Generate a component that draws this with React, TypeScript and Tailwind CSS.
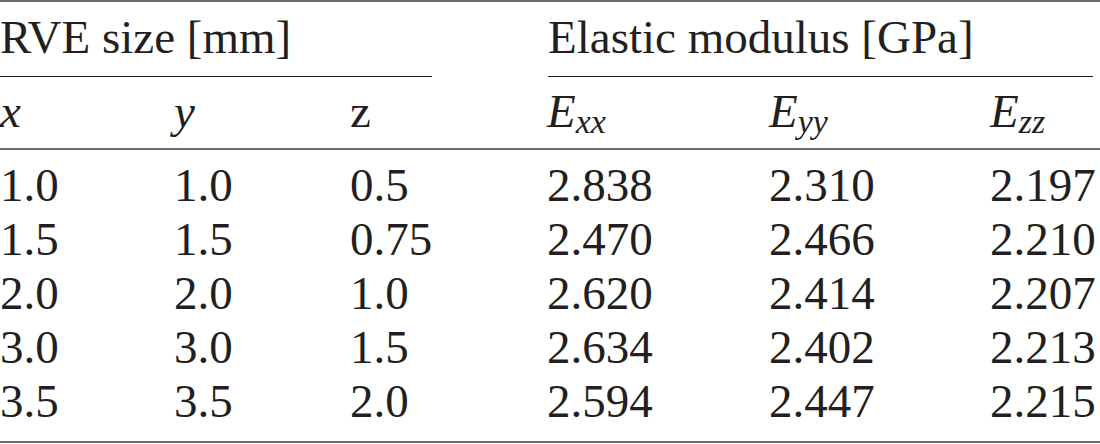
import React from "react";

const rows: [string, string, string, string, string, string][] = [
  ["1.0", "1.0", "0.5", "2.838", "2.310", "2.197"],
  ["1.5", "1.5", "0.75", "2.470", "2.466", "2.210"],
  ["2.0", "2.0", "1.0", "2.620", "2.414", "2.207"],
  ["3.0", "3.0", "1.5", "2.634", "2.402", "2.213"],
  ["3.5", "3.5", "2.0", "2.594", "2.447", "2.215"],
];

const cols = "grid grid-cols-[174px_176px_197px_222px_221px_1fr]";

const Modulus = ({ sub }: { sub: string }) => (
  <span className="italic">
    E<span className="text-[34px] leading-none align-[-6px]">{sub}</span>
  </span>
);

export default function App() {
  return (
    <div className="w-[1100px] h-[444px] bg-white text-[#231f20] font-['Liberation_Serif','Times_New_Roman',serif] text-[47px] leading-[54px] overflow-hidden">
      <div className="border-t-2 border-[#6e6e6e] pt-2">
        {/* group headings */}
        <div className="flex">
          <div className="w-[432px] border-b border-[#231f20] pb-3 whitespace-pre">RVE size [mm]</div>
          <div className="w-[116px]" />
          <div className="w-[545px] border-b border-[#231f20] pb-3 whitespace-pre">Elastic modulus [GPa]</div>
        </div>

        {/* column headings */}
        <div className={`${cols} h-[73px] pt-[7px] border-b-2 border-[#6e6e6e]`}>
          <div className="italic">x</div>
          <div className="italic">y</div>
          <div>z</div>
          <div><Modulus sub="xx" /></div>
          <div><Modulus sub="yy" /></div>
          <div><Modulus sub="zz" /></div>
        </div>

        {/* values */}
        <div className="pt-2 pb-[13px] border-b-2 border-[#6e6e6e]">
          {rows.map((r, i) => (
            <div key={i} className={cols}>
              {r.map((v, j) => (
                <div key={j}>{v}</div>
              ))}
            </div>
          ))}
        </div>
      </div>
    </div>
  );
}
